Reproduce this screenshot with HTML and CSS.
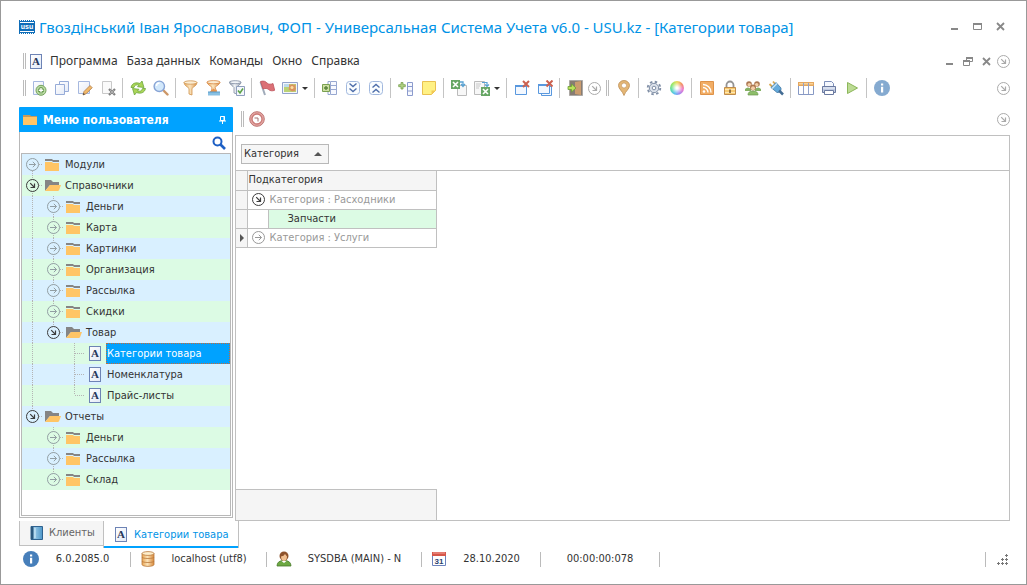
FILE: index.html
```html
<!DOCTYPE html>
<html lang="ru">
<head>
<meta charset="utf-8">
<title>Универсальная Система Учета</title>
<link rel="stylesheet" href="styles.css">
</head>
<body>
<svg class="sprite" width="0" height="0" aria-hidden="true">
<defs>
<linearGradient id="gGold" x1="0" x2="1"><stop offset="0" stop-color="#e9a552"/><stop offset=".45" stop-color="#fbe3b8"/><stop offset="1" stop-color="#d98a3c"/></linearGradient>
<linearGradient id="gSteel" x1="0" x2="1"><stop offset="0" stop-color="#8c97a8"/><stop offset=".45" stop-color="#f1f4f8"/><stop offset="1" stop-color="#8c97a8"/></linearGradient>
<linearGradient id="gPage" x1="0" y1="0" x2="1" y2="1"><stop offset="0" stop-color="#ffffff"/><stop offset="1" stop-color="#e3e9f6"/></linearGradient>
<linearGradient id="gBlue" x1="0" x2="1"><stop offset="0" stop-color="#b5dcf3"/><stop offset="1" stop-color="#4e97c9"/></linearGradient>
<symbol id="i-go" viewBox="0 0 13 13"><circle cx="6.5" cy="6.5" r="6" fill="var(--row,#fff)" stroke="currentColor"/><path d="M3 6.500h6.500M6.800 3.800l2.700 2.700-2.700 2.700" fill="none" stroke="currentColor"/></symbol>
<symbol id="i-open" viewBox="0 0 13 13"><circle cx="6.5" cy="6.5" r="6" fill="var(--row,#fff)" stroke="currentColor"/><path d="M4.200 4.200l4.300 4.300M8.500 4.500v4h-4" fill="none" stroke="currentColor" stroke-width="1.200"/></symbol>
<symbol id="i-folder" viewBox="0 0 16 12"><path d="M0 0h7l1 1h6v2H8L7 2H0z" fill="#858585"/><path d="M0 3h7l1 1h6v8H0z" fill="#ffc566"/></symbol>
<symbol id="i-folder-open" viewBox="0 0 16 12"><path d="M0 0h6l2 2h6v3H5L0 11z" fill="#858585"/><path d="M5 5h11l-2 5.200q-.4.8-1.200.8H0z" fill="#ffc566"/></symbol>
<symbol id="i-doc" viewBox="0 0 12 15"><rect x=".5" y=".5" width="11" height="14" fill="url(#gPage)" stroke="#6d83b5"/><text class="glyph" x="6" y="11" text-anchor="middle">A</text></symbol>
<symbol id="i-add" viewBox="0 0 16 16"><path d="M2.500 1.500h10v13h-10z" fill="url(#gPage)" stroke="#9fb3dd"/><circle cx="10" cy="10.300" r="5" fill="#b5d79c" stroke="#6a9c50"/><path d="M10 7.300v6M7 10.300h6" stroke="#4f8a35" stroke-width="3"/><path d="M10 8v4.600M7.700 10.300h4.600" stroke="#fff" stroke-width="1.400"/></symbol>
<symbol id="i-copy" viewBox="0 0 16 16"><path d="M5.500 1.500h9v10h-9z" fill="url(#gPage)" stroke="#8fa5d5"/><path d="M1.500 4.500h9v10h-9z" fill="url(#gPage)" stroke="#8fa5d5"/></symbol>
<symbol id="i-edit" viewBox="0 0 16 16"><path d="M1.500 1.500h11v12h-11z" fill="url(#gPage)" stroke="#9fb3dd"/><path d="M6 15l1-3.500 6-6 2.200 2.200-6 6z" fill="#f0b45e" stroke="#a9713a" stroke-width=".8"/><path d="M6 15l.5-2 1.500 1.300z" fill="#333"/></symbol>
<symbol id="i-delete" viewBox="0 0 16 16"><path d="M2.500 1.500h9v12h-9z" fill="#fafafa" stroke="#c4c4c4"/><path d="M9 9l6 6M15 9l-6 6" stroke="#777" stroke-width="2.200"/><path d="M10 10l4 4M14 10l-4 4" stroke="#bbb" stroke-width=".7"/></symbol>
<symbol id="i-refresh" viewBox="0 0 16 16"><path d="M1 7.500C2 3 6 2 10 3.500L12 1l2 6.500-6.500-.8L9 5.200C6.500 4.300 4.500 5 4 7.500z" fill="#a4d24a" stroke="#5f9f2b" stroke-width=".8"/><path d="M15.500 8.500c-1 4.500-5 5.500-9 4L4.500 15l-2-6.500 6.500.8-1.500 1.500c2.500.9 4.500.2 5-2.300z" fill="#a4d24a" stroke="#5f9f2b" stroke-width=".8"/></symbol>
<symbol id="i-zoom" viewBox="0 0 16 16"><path d="M10.500 10.500l4 4" stroke="#c98e5a" stroke-width="2.400" stroke-linecap="round"/><circle cx="6.300" cy="6.300" r="5.200" fill="#cfe7fb" stroke="#7d9cd2" stroke-width="1.400"/><path d="M3.500 6a3 3 0 0 1 3-3" fill="none" stroke="#fff" stroke-width="1.400"/></symbol>
<symbol id="i-funnel" viewBox="0 0 16 16"><path d="M1 2.500c0 3 4 4.500 5 6v5.500l3 1V8.500c1-1.500 5-3 5-6z" fill="url(#gGold)" stroke="#cb8a3f" stroke-width=".8"/><ellipse cx="7.500" cy="2.500" rx="6.500" ry="1.700" fill="#fbecd0" stroke="#cb8a3f" stroke-width=".8"/></symbol>
<symbol id="i-funnel2" viewBox="0 0 16 16"><path d="M1 2c0 2.500 4 4 5 5.500L5.500 11h5L9 7.500c1-1.500 5-3 5-5.500z" fill="url(#gGold)" stroke="#d57d35" stroke-width=".8"/><ellipse cx="7.500" cy="2.200" rx="6.500" ry="1.600" fill="#fbecd0" stroke="#d57d35" stroke-width=".8"/><path d="M4 11.500l3.500-3 3.500 3v1H4z" fill="#e78b3c"/><path d="M2 12h12v3.500H2z" fill="#7ebbe0"/><path d="M2 12h12" stroke="#4a93c5"/></symbol>
<symbol id="i-funnel3" viewBox="0 0 16 16"><path d="M.5 2C.5 4.500 4 6 5 7.500V13l2.500.8V7.500c1-1.500 4.500-3 4.500-5.500z" fill="url(#gSteel)" stroke="#76839a" stroke-width=".8"/><ellipse cx="6.200" cy="2.200" rx="5.700" ry="1.500" fill="#f1f4f8" stroke="#76839a" stroke-width=".8"/><path d="M7.500 6.500h8v9h-8z" fill="#f4f7fc" stroke="#8797b8"/><path d="M9 10.500l2 2.500 3-4.500" fill="none" stroke="#4f9b3a" stroke-width="1.600"/></symbol>
<symbol id="i-flag" viewBox="0 0 16 16"><path d="M1.500 2l4.500 13" stroke="#9aa5b5" stroke-width="2"/><path d="M1.500 1.500C5 .5 6.500 1.500 8 3s4 1.500 6 .5l1.700 6.800c-2.700 1-4.700.5-6.200-.8s-3-1.300-5.500-.5z" fill="#d9646b" stroke="#b94750" stroke-width=".8"/></symbol>
<symbol id="i-image" viewBox="0 0 16 16"><path d="M.5 2.500h15v11H.5z" fill="#f4f6fb" stroke="#8a9cc7"/><path d="M2 4h12v8H2z" fill="#b6cf6a"/><path d="M2 4h5v3H2z" fill="#b7d7ea"/><path d="M7 4.500l2 .5 1-1 1.500 1 2-.5v3l.5 1-1 2.500-3 .5-1.500-1-2-1 .5-1.500z" fill="#d78b54"/><circle cx="10" cy="7.500" r="1.500" fill="#fbdc9a"/></symbol>
<symbol id="i-expandcol" viewBox="0 0 16 16"><path d="M8.500 1.500h6v13h-6zM8.500 5.500h6M8.500 9.500h6" fill="#f7f9ff" stroke="#8fa0cd"/><path d="M6 4.500V1.500h2M6 11.500v3h2" fill="none" stroke="#8fa0cd"/><path d="M.5 4.500h7v7h-7z" fill="#c9dd9c" stroke="#6f9943"/><path d="M4 6v4M2 8h4" stroke="#4b7a2b" stroke-width="1.400"/></symbol>
<symbol id="i-down2" viewBox="0 0 16 16"><rect x="1.500" y="1.500" width="13" height="13" rx="3" fill="#fafdff" stroke="#9ab3dc"/><path d="M4.500 3.500L8 6.500l3.500-3M4.500 8.500L8 11.500l3.500-3" fill="none" stroke="#3f62a4" stroke-width="1.400"/></symbol>
<symbol id="i-up2" viewBox="0 0 16 16"><rect x="1.500" y="1.500" width="13" height="13" rx="3" fill="#fafdff" stroke="#9ab3dc"/><path d="M4.500 7.500L8 4.500l3.500 3M4.500 12.500L8 9.500l3.500 3" fill="none" stroke="#3f62a4" stroke-width="1.400"/></symbol>
<symbol id="i-addcol" viewBox="0 0 16 16"><path d="M9.500 2.500h5v13h-5zM9.500 6.500h5M9.500 11h5" fill="#f7f9ff" stroke="#8293c9"/><path d="M3 2.500h2v2.200h2.300v2H5V9H3V6.700H.700v-2H3z" fill="#aace79" stroke="#6f9943" stroke-width=".8"/></symbol>
<symbol id="i-note" viewBox="0 0 16 16"><path d="M1.500 1.500h13v9l-4 4h-9z" fill="#fff07a" stroke="#e8bc43"/><path d="M10.500 14.500v-4h4z" fill="#f3c548"/></symbol>
<symbol id="i-xlout" viewBox="0 0 16 16"><path d="M6.500 5.500h9v10h-9z" fill="#f7f7f7" stroke="#b6b6b6"/><path d="M0 0h9v9H0z" fill="#5b9f58"/><path d="M2 2l5 5M7 2L2 7" stroke="#fff" stroke-width="1.600"/><path d="M9 2h3v3m-2-1l2 2.500 2-2.500" fill="none" stroke="#4b9bd0" stroke-width="1.300"/></symbol>
<symbol id="i-xlin" viewBox="0 0 16 16"><path d="M.5 1.500h10v13H.5z" fill="#f7f7f7" stroke="#b6b6b6"/><path d="M2 4h5M2 6h4M2 8h3" stroke="#c5c5c5"/><path d="M7 7h9v9H7z" fill="#5b9f58"/><path d="M9 9l5 5M14 9l-5 5" stroke="#fff" stroke-width="1.600"/><path d="M8 2.500h5v3m-2-1l2 2 2-2" fill="none" stroke="#4b9bd0" stroke-width="1.200"/></symbol>
<symbol id="i-winx" viewBox="0 0 16 16"><path d="M1.500 5.500h11v9h-11z" fill="#f2f8ff" stroke="#4b90dc"/><path d="M1 5h12v2H1z" fill="#4b90dc"/><path d="M9 1l6 6M15 1L9 7" stroke="#c75442" stroke-width="2"/></symbol>
<symbol id="i-winsx" viewBox="0 0 16 16"><path d="M4.500 6.500h10v9h-10z" fill="#f2f8ff" stroke="#4b90dc"/><path d="M1.500 4.500h11v9h-11z" fill="#f2f8ff" stroke="#4b90dc"/><path d="M1 4h12v2H1z" fill="#4b90dc"/><path d="M9.500 .5l6 6M15.500 .5l-6 6" stroke="#c75442" stroke-width="2"/></symbol>
<symbol id="i-exit" viewBox="0 0 16 16"><path d="M2.500.5h13v15h-13z" fill="#7d7168" stroke="#a5a19d"/><path d="M8 2l6-1v14l-6-1z" fill="#c79462"/><path d="M1 6.500h3.500V4L9 8l-4.500 4V9.500H1z" fill="#b5e04d" stroke="#5e9525" stroke-width=".8"/></symbol>
<symbol id="i-pin" viewBox="0 0 16 16"><path d="M8 15.500C6.500 11 2.500 9 2.500 5.500a5.500 5 0 0 1 11 0C13.500 9 9.500 11 8 15.500z" fill="#e2b06a" stroke="#b98748" stroke-width=".8"/><circle cx="8" cy="5.500" r="2.500" fill="#fff" stroke="#b98748" stroke-width=".6"/></symbol>
<symbol id="i-gear" viewBox="0 0 16 16"><circle cx="8" cy="8" r="6.300" fill="none" stroke="#76869f" stroke-width="1.800" stroke-dasharray="2.500 2.450"/><circle cx="8" cy="8" r="4.700" fill="#d8dfe9" stroke="#76869f"/><circle cx="8" cy="8" r="1.800" fill="#fff" stroke="#76869f"/></symbol>
<symbol id="i-rss" viewBox="0 0 16 16"><path d="M1.500 1.500h13v13h-13z" fill="#f0a758" stroke="#dc893a"/><circle cx="5" cy="11.500" r="1.300" fill="#fff"/><path d="M4 7.500a5 5 0 0 1 5 5M4 4.500a8 8 0 0 1 8 8" fill="none" stroke="#fff" stroke-width="1.400"/></symbol>
<symbol id="i-lock" viewBox="0 0 16 16"><path d="M4.500 8V5a3.500 3.500 0 0 1 7 0v3" fill="none" stroke="#8b8b8b" stroke-width="1.800"/><path d="M2.500 7.500h11v7h-11z" fill="#f8c766" stroke="#ba8340"/><path d="M3 9.500h10M3 12.500h10" stroke="#ffe6ad"/><path d="M8 9.500v3.500" stroke="#694a25" stroke-width="1.500"/></symbol>
<symbol id="i-people" viewBox="0 0 16 16"><path d="M0 9q3-3 6 0v2H0zM10 9q3-3 6 0v2h-6z" fill="#7cab59"/><circle cx="4" cy="4" r="2.800" fill="#a56c43"/><circle cx="12" cy="4" r="2.800" fill="#a56c43"/><circle cx="4.300" cy="4.700" r="1.800" fill="#f3caa0"/><circle cx="11.700" cy="4.700" r="1.800" fill="#f3caa0"/><circle cx="8" cy="7.500" r="3" fill="#a56c43"/><circle cx="8" cy="8.300" r="2" fill="#f3caa0"/><path d="M3 15q0-4 5-4t5 4z" fill="#84b95e" stroke="#5e9141" stroke-width=".7"/></symbol>
<symbol id="i-plug" viewBox="0 0 16 16"><path d="M1.500 4l3 3M5 1.500l2.500 3" stroke="#d8a345" stroke-width="1.800"/><path d="M3 7.500L8 2.500l5 5.500c.5 3-1.500 5-4 4.500z" fill="#59a4da" stroke="#336d9d" stroke-width=".8"/><path d="M4 8.500l5-5" stroke="#c7e4f5" stroke-width="1.500"/><path d="M11 10.500l4 4" stroke="#34608c" stroke-width="2.500"/></symbol>
<symbol id="i-table" viewBox="0 0 16 16"><path d="M.5 2.500h15v12H.5z" fill="#fff" stroke="#7d91bf"/><path d="M0 2h16v4H0z" fill="#e2a053"/><path d="M1 3h14v1.500H1z" fill="#fbd08e"/><path d="M5.500 3v11M10.500 3v11" stroke="#8c9cc5"/></symbol>
<symbol id="i-print" viewBox="0 0 16 16"><path d="M3.500 1.500h7l2 2v4h-9z" fill="#f5f8fe" stroke="#7386b5"/><path d="M1.500 6.500h13v6h-13z" fill="#bac6df" stroke="#5f6f99"/><path d="M2 8h12" stroke="#edf2fa"/><path d="M3.500 10.500h9v4h-9z" fill="#fff" stroke="#5f6f99"/></symbol>
<symbol id="i-play" viewBox="0 0 16 16"><path d="M3.500 2.500l10 5.500-10 5.500z" fill="#b7d98b" stroke="#83b14d"/></symbol>
<symbol id="i-info" viewBox="0 0 16 16"><circle cx="8" cy="8" r="8" fill="currentColor"/><path d="M7 3.500h2.200v2H7zM7 6.700h2.200v5.800H7z" fill="#fff"/></symbol>
<symbol id="i-stop" viewBox="0 0 16 16"><circle cx="8" cy="8" r="7.300" fill="#e3a19d" stroke="#b96b69"/><circle cx="8" cy="8" r="5" fill="#fff" stroke="#c66e6b" stroke-width="1.300"/><path d="M5.500 7h3.500v3.500" fill="none" stroke="#9c6b6b"/></symbol>
<symbol id="i-search" viewBox="0 0 14 14"><circle cx="5.500" cy="5.500" r="4" fill="none" stroke="#1d5fc4" stroke-width="2"/><path d="M8.500 8.500l4.500 4.500" stroke="#1d5fc4" stroke-width="2.600"/></symbol>
<symbol id="i-book" viewBox="0 0 13 14"><path d="M1 .5h11.500v13H1z" fill="url(#gBlue)" stroke="#2f628f"/><path d="M1 1h2.500v12H1z" fill="#2b587e"/><path d="M5 2v10" stroke="#d8eefa"/></symbol>
<symbol id="i-db" viewBox="0 0 14 16"><path d="M1 2.500v11c0 2.500 12 2.500 12 0v-11z" fill="url(#gGold)" stroke="#b9793c" stroke-width=".8"/><path d="M1 6c0 2 12 2 12 0M1 10c0 2 12 2 12 0" fill="none" stroke="#b9793c" stroke-width=".8"/><ellipse cx="7" cy="2.500" rx="6" ry="1.900" fill="#fdeecb" stroke="#b9793c" stroke-width=".8"/></symbol>
<symbol id="i-user" viewBox="0 0 16 16"><path d="M1 15q0-5.500 7-5.500t7 5.500z" fill="#6da843" stroke="#477a2a" stroke-width=".8"/><path d="M5.500 10l2.500 2 2.500-2z" fill="#fff"/><circle cx="8" cy="5" r="4.500" fill="#8e532c"/><path d="M5 5.500q3-.5 4-2.500l2 2.500q0 4-3 4.500-3-.5-3-4.500z" fill="#f2c191"/></symbol>
</defs>
</svg>

<div class="window">
  <header class="titlebar">
    <svg class="logo" viewBox="0 0 16 16" aria-hidden="true"><path d="M0 1.500h16M0 14.500h16" stroke="#1170b8" stroke-dasharray="1 1"/><rect x="0" y="2" width="16" height="12" fill="#0f6db8"/><path d="M1 3.500h14M1 12.500h14" stroke="#fff"/><text class="mark" x="8" y="10" text-anchor="middle">usu</text></svg>
    <h1 class="title">Гвоздінський Іван Ярославович, ФОП - Универсальная Система Учета v6.0 - USU.kz - [Категории товара]</h1>
    <div class="caption caption-main">
      <button aria-label="Свернуть"><svg width="9" height="9"><path d="M1 7h7" stroke="#888" stroke-width="2"/></svg></button>
      <button aria-label="Развернуть"><svg width="9" height="9"><path d="M.5 1.500h8v6h-8z" fill="none" stroke="#888"/><path d="M0 2h9" stroke="#888" stroke-width="2"/></svg></button>
      <button aria-label="Закрыть"><svg width="9" height="9"><path d="M1 1l7 7M8 1L1 8" stroke="#888" stroke-width="1.800"/></svg></button>
    </div>
  </header>

  <nav class="menubar">
    <i class="handle"></i>
    <svg class="doc" width="12" height="15"><use href="#i-doc"/></svg>
    <button>Программа</button><button>База данных</button><button>Команды</button><button>Окно</button><button>Справка</button>
    <div class="caption caption-child">
      <button aria-label="Свернуть окно"><svg width="9" height="9"><path d="M1 7h7" stroke="#888" stroke-width="2"/></svg></button>
      <button aria-label="Восстановить окно"><svg width="10" height="9"><path d="M3.500 3V.5h6v4H7" fill="none" stroke="#888"/><path d="M3 1h7M0 4h7" stroke="#888" stroke-width="2"/><path d="M.5 3.500h6v5h-6z" fill="none" stroke="#888"/></svg></button>
      <button aria-label="Закрыть окно"><svg width="9" height="9"><path d="M1 1l7 7M8 1L1 8" stroke="#888" stroke-width="1.800"/></svg></button>
    </div>
    <button class="more" aria-label="Ещё"><svg width="13" height="13"><use href="#i-open"/></svg></button>
  </nav>

  <div class="toolbar" role="toolbar">
    <i class="handle"></i>
    <button class="tool" aria-label="Добавить"><svg><use href="#i-add"/></svg></button>
    <button class="tool" aria-label="Копировать"><svg><use href="#i-copy"/></svg></button>
    <button class="tool" aria-label="Изменить"><svg><use href="#i-edit"/></svg></button>
    <button class="tool" aria-label="Удалить"><svg><use href="#i-delete"/></svg></button>
    <i class="sep"></i>
    <button class="tool" aria-label="Обновить"><svg><use href="#i-refresh"/></svg></button>
    <button class="tool" aria-label="Поиск"><svg><use href="#i-zoom"/></svg></button>
    <i class="sep"></i>
    <button class="tool" aria-label="Фильтр"><svg><use href="#i-funnel"/></svg></button>
    <button class="tool" aria-label="Строка фильтра"><svg><use href="#i-funnel2"/></svg></button>
    <button class="tool" aria-label="Выбор фильтра"><svg><use href="#i-funnel3"/></svg></button>
    <i class="sep"></i>
    <button class="tool" aria-label="Флаг"><svg><use href="#i-flag"/></svg></button>
    <button class="tool drop" aria-label="Изображение"><svg><use href="#i-image"/></svg><b class="caret"></b></button>
    <i class="sep"></i>
    <button class="tool" aria-label="Группировка"><svg><use href="#i-expandcol"/></svg></button>
    <button class="tool" aria-label="Развернуть все"><svg><use href="#i-down2"/></svg></button>
    <button class="tool" aria-label="Свернуть все"><svg><use href="#i-up2"/></svg></button>
    <i class="sep"></i>
    <button class="tool" aria-label="Добавить столбец"><svg><use href="#i-addcol"/></svg></button>
    <button class="tool" aria-label="Заметка"><svg><use href="#i-note"/></svg></button>
    <i class="sep"></i>
    <button class="tool" aria-label="Экспорт"><svg><use href="#i-xlout"/></svg></button>
    <button class="tool drop" aria-label="Импорт"><svg><use href="#i-xlin"/></svg><b class="caret"></b></button>
    <i class="sep"></i>
    <button class="tool" aria-label="Закрыть вкладку"><svg><use href="#i-winx"/></svg></button>
    <button class="tool" aria-label="Закрыть вкладки"><svg><use href="#i-winsx"/></svg></button>
    <i class="sep"></i>
    <button class="tool" aria-label="Выход"><svg><use href="#i-exit"/></svg></button>
    <button class="more inline" aria-label="Ещё"><svg width="13" height="13"><use href="#i-open"/></svg></button>
    <i class="handle mid"></i>
    <button class="tool" aria-label="Карта"><svg><use href="#i-pin"/></svg></button>
    <i class="sep"></i>
    <button class="tool" aria-label="Настройки"><svg><use href="#i-gear"/></svg></button>
    <button class="tool" aria-label="Цвета"><span class="wheel"></span></button>
    <i class="sep"></i>
    <button class="tool" aria-label="Новости"><svg><use href="#i-rss"/></svg></button>
    <button class="tool" aria-label="Блокировка"><svg><use href="#i-lock"/></svg></button>
    <button class="tool" aria-label="Пользователи"><svg><use href="#i-people"/></svg></button>
    <button class="tool" aria-label="Подключение"><svg><use href="#i-plug"/></svg></button>
    <i class="sep"></i>
    <button class="tool" aria-label="Таблица"><svg><use href="#i-table"/></svg></button>
    <button class="tool" aria-label="Печать"><svg><use href="#i-print"/></svg></button>
    <button class="tool" aria-label="Запуск"><svg><use href="#i-play"/></svg></button>
    <i class="sep"></i>
    <button class="tool info" aria-label="Справка"><svg><use href="#i-info"/></svg></button>
    <button class="more" aria-label="Ещё"><svg width="13" height="13"><use href="#i-open"/></svg></button>
  </div>

  <div class="workspace">
    <aside class="sidebar">
      <div class="side-head">
        <svg width="15" height="12" viewBox="0 0 15 12"><path d="M0 1h7l1 1h6v2H0z" fill="#c39a5d"/><path d="M0 3h14v8H0z" fill="#ffc566"/></svg>
        <h2>Меню пользователя</h2>
        <button aria-label="Закрепить"><svg width="7" height="8"><path d="M1.500.5h4v4h-4z" fill="none" stroke="#fff"/><path d="M5 0v5M0 5h7M3.500 5v3" stroke="#fff"/></svg></button>
      </div>
      <div class="side-search">
        <input type="text" aria-label="Поиск по меню">
        <button aria-label="Найти"><svg width="14" height="14"><use href="#i-search"/></svg></button>
      </div>
      <ul class="tree">
        <li class="row"><button class="tg first"><svg><use href="#i-go"/></svg></button><svg class="fd"><use href="#i-folder"/></svg><span>Модули</span></li>
        <li class="row"><button class="tg on"><svg><use href="#i-open"/></svg></button><svg class="fd"><use href="#i-folder-open"/></svg><span>Справочники</span></li>
        <li class="row"><i class="guide"></i><button class="tg"><svg><use href="#i-go"/></svg></button><svg class="fd"><use href="#i-folder"/></svg><span>Деньги</span></li>
        <li class="row"><i class="guide"></i><button class="tg"><svg><use href="#i-go"/></svg></button><svg class="fd"><use href="#i-folder"/></svg><span>Карта</span></li>
        <li class="row"><i class="guide"></i><button class="tg"><svg><use href="#i-go"/></svg></button><svg class="fd"><use href="#i-folder"/></svg><span>Картинки</span></li>
        <li class="row"><i class="guide"></i><button class="tg"><svg><use href="#i-go"/></svg></button><svg class="fd"><use href="#i-folder"/></svg><span>Организация</span></li>
        <li class="row"><i class="guide"></i><button class="tg"><svg><use href="#i-go"/></svg></button><svg class="fd"><use href="#i-folder"/></svg><span>Рассылка</span></li>
        <li class="row"><i class="guide"></i><button class="tg"><svg><use href="#i-go"/></svg></button><svg class="fd"><use href="#i-folder"/></svg><span>Скидки</span></li>
        <li class="row"><i class="guide"></i><button class="tg on end"><svg><use href="#i-open"/></svg></button><svg class="fd"><use href="#i-folder-open"/></svg><span>Товар</span></li>
        <li class="row"><i class="guide"></i><i class="guide none"></i><i class="guide tee"></i><svg class="dc"><use href="#i-doc"/></svg><span class="selected">Категории товара</span></li>
        <li class="row"><i class="guide"></i><i class="guide none"></i><i class="guide tee"></i><svg class="dc"><use href="#i-doc"/></svg><span>Номенклатура</span></li>
        <li class="row"><i class="guide"></i><i class="guide none"></i><i class="guide tee end"></i><svg class="dc"><use href="#i-doc"/></svg><span>Прайс-листы</span></li>
        <li class="row"><button class="tg on end"><svg><use href="#i-open"/></svg></button><svg class="fd"><use href="#i-folder-open"/></svg><span>Отчеты</span></li>
        <li class="row"><i class="guide none"></i><button class="tg"><svg><use href="#i-go"/></svg></button><svg class="fd"><use href="#i-folder"/></svg><span>Деньги</span></li>
        <li class="row"><i class="guide none"></i><button class="tg"><svg><use href="#i-go"/></svg></button><svg class="fd"><use href="#i-folder"/></svg><span>Рассылка</span></li>
        <li class="row"><i class="guide none"></i><button class="tg end"><svg><use href="#i-go"/></svg></button><svg class="fd"><use href="#i-folder"/></svg><span>Склад</span></li>
      </ul>
    </aside>

    <main class="main">
      <div class="main-bar">
        <i class="handle"></i>
        <button class="tool" aria-label="Закрыть форму"><svg><use href="#i-stop"/></svg></button>
        <button class="more" aria-label="Ещё"><svg width="13" height="13"><use href="#i-open"/></svg></button>
      </div>
      <section class="grid">
        <div class="group-panel"><button class="group-chip">Категория<b class="tri"></b></button></div>
        <table class="data">
          <colgroup><col class="col-ind"><col class="col-indent"><col></colgroup>
          <thead><tr><th class="ind"></th><th colspan="2">Подкатегория</th></tr></thead>
          <tbody>
            <tr class="group on"><td class="ind"></td><td colspan="2"><div><svg><use href="#i-open"/></svg><span>Категория : Расходники</span></div></td></tr>
            <tr class="leaf"><td class="ind"></td><td class="indent"></td><td class="value">Запчасти</td></tr>
            <tr class="group"><td class="ind"><b class="cursor"></b></td><td colspan="2"><div><svg><use href="#i-go"/></svg><span>Категория : Услуги</span></div></td></tr>
          </tbody>
        </table>
        <div class="summary"></div>
      </section>
    </main>
  </div>

  <div class="tabs" role="tablist">
    <button class="tab" role="tab"><svg width="13" height="14"><use href="#i-book"/></svg>Клиенты</button>
    <button class="tab active" role="tab" aria-selected="true"><svg width="12" height="15"><use href="#i-doc"/></svg>Категории товара</button>
  </div>

  <footer class="status">
    <div class="cell c1"><svg class="blue"><use href="#i-info"/></svg><span>6.0.2085.0</span></div>
    <div class="cell c2"><svg><use href="#i-db"/></svg><span>localhost (utf8)</span></div>
    <div class="cell c3"><svg><use href="#i-user"/></svg><span>SYSDBA (MAIN) - N</span></div>
    <div class="cell c4"><svg viewBox="0 0 16 16"><path d="M1.500 1.500h13v13h-13z" fill="#fff" stroke="#6c83bd"/><path d="M1 1h14v4H1z" fill="#d6574a"/><path d="M2 2h12" stroke="#f2a39a"/><text class="day" x="8" y="13" text-anchor="middle">31</text></svg><span>28.10.2020</span></div>
    <div class="cell c5"><span>00:00:00:078</span></div>
    <div class="grip"><svg width="11" height="11" viewBox="0 0 11 11"><path d="M8 1.500h3M9.500 0v3M4 5.500h3M5.500 4v3M8 5.500h3M9.500 4v3M0 9.500h3M1.500 8v3M4 9.500h3M5.500 8v3M8 9.500h3M9.500 8v3" stroke="#777"/></svg></div>
  </footer>
</div>
</body>
</html>
```
FILE: styles.css
```css
* { box-sizing: border-box; }

body {
  margin: 0;
  background: #fff;
  color: #333;
  font: 11px/16px "DejaVu Sans Condensed", "DejaVu Sans", sans-serif;
}

button {
  margin: 0;
  padding: 0;
  border: 0;
  background: none;
  color: inherit;
  font: inherit;
  display: inline-flex;
  align-items: center;
  justify-content: center;
}

svg { display: block; flex: none; }
.sprite { position: absolute; }
.glyph { font: bold 11px "Liberation Serif", serif; fill: #26365a; }
.mark { font: bold 7px "Liberation Sans", sans-serif; fill: #fff; }
.day { font: bold 8px "Liberation Sans", sans-serif; fill: #2d3f6d; }

.window {
  min-height: 100vh;
  display: flex;
  flex-direction: column;
  border: 1px solid #999;
  padding: 0 16px 14px 18px;
}

.titlebar {
  display: flex;
  align-items: center;
  height: 51px;
  gap: 4px;
}
.logo { width: 16px; height: 16px; }
.title {
  margin: 0;
  flex: 1;
  white-space: nowrap;
  font: 15px/22px "Noto Sans", sans-serif;
  color: #0093e6;
}
.caption { display: flex; align-items: center; }
.caption-main { gap: 14px; margin-right: 5px; }
.caption-child { gap: 9px; margin-left: auto; margin-right: 6px; }

.menubar {
  display: flex;
  align-items: center;
  height: 18px;
  padding-left: 4px;
  font: 12px/18px "Noto Sans", sans-serif;
}
.menubar > button { margin-right: 9px; white-space: nowrap; }
.doc { margin: 0 8px 0 4px; }
.handle {
  flex: none;
  width: 3px;
  height: 16px;
  border: solid #bbb;
  border-width: 0 1px;
}
.menubar > .more { margin-right: 0; }
.more { width: 13px; height: 13px; flex: none; color: #aaa; }

.toolbar {
  display: flex;
  align-items: center;
  height: 36px;
  padding-left: 4px;
}
.toolbar > .more:last-child, .main-bar > .more { margin-left: auto; }
.toolbar > .handle { margin-right: 1px; }
.toolbar > .mid { margin: 0 3px; }
.toolbar > .inline { margin: 0 2px; }
.tool { width: 23px; height: 23px; flex: none; opacity: .92; }
.tool svg { width: 16px; height: 16px; }
.tool.info { color: #7ba3cd; }
.drop { width: 33px; gap: 4px; }
.caret {
  border: solid transparent;
  border-width: 3px 3px 0;
  border-top-color: #222;
}
.sep {
  flex: none;
  width: 1px;
  height: 20px;
  margin: 0 3px;
  background: #c4c4c4;
}
.wheel {
  width: 14px;
  height: 14px;
  border-radius: 50%;
  background: radial-gradient(#fff 10%, transparent 60%), conic-gradient(#e8d84c, #f2865c, #f070c8, #9a7bf0, #4bbdf0, #4fdc9c, #8ee65a, #e8d84c);
}

.workspace { flex: 1; display: flex; gap: 2px; margin-top: 1px; }

.sidebar {
  width: 214px;
  flex: none;
  display: flex;
  flex-direction: column;
  border: 1px solid #b8b8b8;
  border-top-color: #00a2ff;
  padding: 0 1px 1px;
  margin-bottom: 3px;
}
.side-head {
  display: flex;
  align-items: center;
  gap: 5px;
  height: 24px;
  margin: 0 -2px;
  padding: 0 7px 0 4px;
  background: #00a2ff;
  color: #fff;
}
.side-head h2 { margin: 0; flex: 1; font-size: 12px; line-height: 16px; }
.side-search { display: flex; height: 21px; padding-right: 5px; }
.side-search input {
  flex: 1;
  min-width: 0;
  border: 0;
  padding: 0 4px;
  outline: 0;
  background: none;
  font: inherit;
}

.tree {
  flex: 1;
  margin: 0;
  padding: 0;
  list-style: none;
  border: 1px solid #b8b8b8;
}
.row {
  --row: #d9f0ff;
  display: flex;
  align-items: center;
  height: 21px;
  background: var(--row);
}
.row:nth-child(even) { --row: #dcfbe4; }
.row > span { line-height: 21px; white-space: nowrap; }
.row .selected {
  flex: 1;
  height: 21px;
  line-height: 19px;
  margin-left: -1px;
  background: #00a2ff;
  border: 1px dotted #c96a35;
  color: #fff;
}

/* dotted connectors: vertical line through the cell, horizontal stub to the right */
.tg, .guide {
  --v: repeating-linear-gradient(#b4b4b4 0 1px, transparent 1px 2px);
  --h: repeating-linear-gradient(90deg, #b4b4b4 0 1px, transparent 1px 2px);
  flex: none;
  width: 21px;
  height: 21px;
  background: var(--v) 10px 0 / 1px 100% no-repeat, var(--h) 17px 10px / 4px 1px no-repeat;
}
.tg { color: #929ea3; }
.tg svg { width: 13px; height: 13px; }
.tg.on { color: #3c3c3c; }
.tg.first { background: var(--v) 10px 11px / 1px 10px no-repeat, var(--h) 17px 10px / 4px 1px no-repeat; }
.tg.end { background: var(--v) 10px 0 / 1px 10px no-repeat, var(--h) 17px 10px / 4px 1px no-repeat; }
.guide { background: var(--v) 10px 0 / 1px 100% no-repeat; }
.guide.none { background: none; }
.guide.tee { background: var(--v) 10px 0 / 1px 100% no-repeat, var(--h) 11px 10px / 10px 1px no-repeat; }
.guide.tee.end { background: var(--v) 10px 0 / 1px 10px no-repeat, var(--h) 11px 10px / 10px 1px no-repeat; }
.fd { width: 16px; height: 12px; margin: 0 4px 0 2px; }
.dc { width: 12px; height: 15px; margin: 0 6px 0 4px; }

.main { flex: 1; min-width: 0; display: flex; flex-direction: column; }
.main-bar {
  display: flex;
  align-items: center;
  gap: 1px;
  height: 24px;
  margin-bottom: 4px;
  padding-left: 6px;
}
.grid {
  flex: 1;
  display: flex;
  flex-direction: column;
  align-items: flex-start;
  border: 1px solid #c0c0c0;
}
.group-panel {
  align-self: stretch;
  padding: 8px 5px 6px;
  border-bottom: 1px solid #c0c0c0;
}
.group-chip {
  display: flex;
  gap: 15px;
  padding: 1px 6px 1px 2px;
  border: 1px solid #b8b8b8;
  background: #f6f6f6;
}
.tri {
  border: solid transparent;
  border-width: 0 4px 4px;
  border-bottom-color: #555;
}
.data {
  width: 201px;
  border-collapse: collapse;
  table-layout: fixed;
}
.col-ind { width: 11px; }
.col-indent { width: 21px; }
.data th, .data td {
  height: 19px;
  padding: 0;
  border: 1px solid #c0c0c0;
  font-weight: normal;
  text-align: left;
  line-height: 16px;
}
.data th { background: #f5f5f5; border-top: 0; padding-left: 1px; }
.data tr > :first-child { border-left: 0; }
.data .ind { background: #f5f5f5; }
.data .group { color: #999; }
.data .group.on svg { color: #3c3c3c; }
.group div { display: flex; align-items: center; gap: 5px; padding-left: 4px; }
.group svg { width: 13px; height: 13px; }
.data .group.on td:last-child { border-bottom-color: #c0c0c0; }
.data .value { background: #dcfbe4; padding-left: 19px; }
.cursor {
  display: block;
  width: 0;
  margin-left: 4px;
  border: solid transparent;
  border-width: 4px 0 4px 4px;
  border-left-color: #555;
}
.summary {
  width: 201px;
  height: 31px;
  margin-top: auto;
  border: solid #c0c0c0;
  border-width: 1px 1px 0 0;
  background: #f5f5f5;
}

.tabs { display: flex; align-items: flex-start; height: 27px; }
.tab {
  height: 25px;
  gap: 6px;
  padding: 0 8px 0 10px;
  border: 1px solid #c0c0c0;
  border-top: 0;
  border-right: 0;
  background: #f5f5f5;
  color: #666;
  white-space: nowrap;
}
.tab.active {
  height: 27px;
  gap: 7px;
  padding: 0 10px 0 11px;
  border: solid #c0c0c0;
  border-width: 0 1px;
  box-shadow: inset 0 -2px #00a2ff;
  background: #fff;
  color: #0093e6;
}

.status { display: flex; align-items: center; height: 22px; }
.cell {
  display: flex;
  align-items: center;
  height: 15px;
  border-right: 1px solid #bbb;
  white-space: nowrap;
}
.cell svg { width: 16px; height: 16px; }
.cell .blue { color: #477fba; }
.cell span { flex: 1; text-align: center; padding-right: 4px; }
.c1 { width: 112px; padding-left: 4px; }
.c2 { width: 136px; padding-left: 9px; }
.c3 { width: 155px; padding-left: 9px; }
.c4 { width: 119px; padding-left: 9px; }
.c5 { width: 119px; padding-left: 4px; }
.grip {
  display: flex;
  align-items: center;
  height: 15px;
  margin-left: auto;
  padding: 0 2px 0 11px;
  border-left: 1px solid #bbb;
}
```
